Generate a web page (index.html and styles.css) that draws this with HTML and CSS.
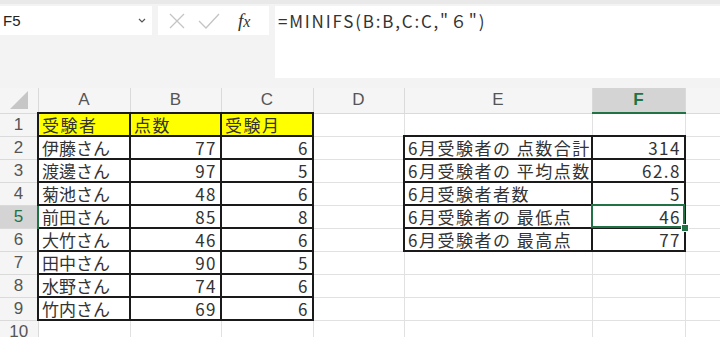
FILE: index.html
```html
<!DOCTYPE html>
<html lang="ja">
<head>
    <meta charset="UTF-8">
    <title>MINIFS</title>
    <link rel="stylesheet" href="styles.css">
</head>
<body>
    <div class="topbar">
        <div class="namebox">
            <span>F5</span>
            <svg class="chevron" width="8" height="5" viewBox="0 0 8 5"><path d="M1 1 L4 4 L7 1" fill="none" stroke="#555" stroke-width="1.2"/></svg>
        </div>
        <div class="buttons">
            <svg width="18" height="18" viewBox="0 0 18 18"><path d="M2 2 L16 16 M16 2 L2 16" stroke="#c4c4c4" stroke-width="1.3"/></svg>
            <svg width="22" height="16" viewBox="0 0 22 16"><path d="M1 8 L8 15 L21 1" fill="none" stroke="#c4c4c4" stroke-width="1.3"/></svg>
            <span class="fx"><i>f</i><i class="x">x</i></span>
        </div>
        <div class="formula">=MINIFS(B:B,C:C,"６")</div>
    </div>

    <table class="sheet">
        <colgroup>
            <col class="c-row">
            <col class="c-a">
            <col class="c-b">
            <col class="c-c">
            <col class="c-d">
            <col class="c-e">
            <col class="c-f">
            <col>
        </colgroup>
        <tr class="heads">
            <th class="corner"><svg width="18" height="18" viewBox="0 0 18 18"><path d="M18 0 L18 18 L0 18 Z" fill="#c6c6c6"/></svg></th>
            <th>A</th><th>B</th><th>C</th><th>D</th><th>E</th><th class="sel-col">F</th><th></th>
        </tr>
        <tr>
            <th>1</th>
            <td class="b hl">受験者</td><td class="b hl">点数</td><td class="b hl">受験月</td>
            <td></td><td></td><td></td><td></td>
        </tr>
        <tr>
            <th>2</th>
            <td class="b nm">伊藤さん</td><td class="b n">77</td><td class="b n">6</td>
            <td></td><td class="b">6月受験者の 点数合計</td><td class="b n">314</td><td></td>
        </tr>
        <tr>
            <th>3</th>
            <td class="b nm">渡邊さん</td><td class="b n">97</td><td class="b n">5</td>
            <td></td><td class="b">6月受験者の 平均点数</td><td class="b n">62.8</td><td></td>
        </tr>
        <tr>
            <th>4</th>
            <td class="b nm">菊池さん</td><td class="b n">48</td><td class="b n">6</td>
            <td></td><td class="b">6月受験者者数</td><td class="b n">5</td><td></td>
        </tr>
        <tr>
            <th class="sel-row">5</th>
            <td class="b nm">前田さん</td><td class="b n">85</td><td class="b n">8</td>
            <td></td><td class="b">6月受験者の 最低点</td><td class="b n active">46<span class="handle"></span></td><td></td>
        </tr>
        <tr>
            <th>6</th>
            <td class="b nm">大竹さん</td><td class="b n">46</td><td class="b n">6</td>
            <td></td><td class="b">6月受験者の 最高点</td><td class="b n">77</td><td></td>
        </tr>
        <tr>
            <th>7</th>
            <td class="b nm">田中さん</td><td class="b n">90</td><td class="b n">5</td>
            <td></td><td></td><td></td><td></td>
        </tr>
        <tr>
            <th>8</th>
            <td class="b nm">水野さん</td><td class="b n">74</td><td class="b n">6</td>
            <td></td><td></td><td></td><td></td>
        </tr>
        <tr>
            <th>9</th>
            <td class="b nm">竹内さん</td><td class="b n">69</td><td class="b n">6</td>
            <td></td><td></td><td></td><td></td>
        </tr>
        <tr>
            <th>10</th>
            <td></td><td></td><td></td><td></td><td></td><td></td><td></td>
        </tr>
    </table>
</body>
</html>
```

FILE: styles.css
```css
body {
    margin: 0;
    width: 720px;
    height: 337px;
    overflow: hidden;
    background: #fff;
    font-family: "Noto Sans CJK JP", "Noto Sans", sans-serif;
    color: #2b2b2b;
}
.topbar {
    height: 88px;
    box-sizing: border-box;
    background: #f3f3f3;
    border-top: 4px solid #e9e9e9;
    padding-top: 2px;
    display: flex;
    align-items: flex-start;
}
.namebox {
    width: 152px;
    height: 29px;
    box-sizing: border-box;
    background: #fff;
    display: flex;
    align-items: center;
    justify-content: space-between;
    padding: 0 6px 0 3px;
    font-family: "Liberation Sans", sans-serif;
    font-size: 15px;
    color: #222;
}
.buttons {
    width: 111px;
    height: 29px;
    margin-left: 6px;
    background: #fff;
    display: flex;
    align-items: center;
    gap: 12px;
    padding-left: 10px;
    box-sizing: border-box;
}
.fx {
    font-family: "Liberation Serif", serif;
    font-size: 19px;
    color: #333;
    margin-left: 6px;
}
.fx .x {
    font-size: 16px;
}
.formula {
    flex: 1;
    height: 72px;
    margin-left: 6px;
    background: #fff;
    box-sizing: border-box;
    padding: 2px 0 0 3px;
    font-size: 17px;
    letter-spacing: 1.8px;
    color: #333;
}
.sheet {
    border-collapse: collapse;
    table-layout: fixed;
    width: 735px;
}
.c-row { width: 38px; }
.c-a { width: 92px; }
.c-b { width: 91px; }
.c-c { width: 92px; }
.c-d { width: 91px; }
.c-e { width: 188px; }
.c-f { width: 93px; }
.sheet tr {
    height: 23px;
}
.sheet tr.heads {
    height: 25px;
}
.sheet th, .sheet td {
    padding: 0 3px;
    border: 1px solid #e1e1e1;
    white-space: nowrap;
    overflow: hidden;
}
.sheet th {
    background: #f5f5f5;
    border-color: #dadada;
    font-family: "Liberation Sans", sans-serif;
    font-weight: normal;
    font-size: 17px;
    line-height: 18px;
    color: #555;
    text-align: center;
}
.heads th {
    border-top: none;
}
.sheet th:first-child {
    border-left: none;
}
.corner {
    vertical-align: bottom;
    text-align: right;
    padding: 0 2px 2px 0;
    line-height: 0;
}
.sel-col {
    background: #d4d4d4 !important;
    color: #217346 !important;
    font-weight: bold !important;
    border-bottom: 2px solid #217346 !important;
}
.sel-row {
    background: #d4d4d4 !important;
    color: #217346 !important;
    border-right: 2px solid #217346 !important;
}
.sheet td {
    font-size: 17px;
    letter-spacing: 1.5px;
    line-height: 18px;
    color: #333;
}
.sheet td.b {
    border: 2px solid #1a1a1a;
}
.sheet td.nm {
    letter-spacing: 0;
}
.hl {
    background: #ffff00;
}
.n {
    text-align: right;
    letter-spacing: 1px;
    color: #444;
}
.sheet td.active {
    position: relative;
    overflow: visible;
}
.sheet td.active::after {
    content: "";
    position: absolute;
    left: -2px;
    top: -2px;
    right: -1px;
    bottom: -1px;
    border: 2px solid #217346;
}
.handle {
    position: absolute;
    right: -5px;
    bottom: -5px;
    width: 6px;
    height: 6px;
    background: #217346;
    border: 1px solid #fff;
    z-index: 1;
}
```
